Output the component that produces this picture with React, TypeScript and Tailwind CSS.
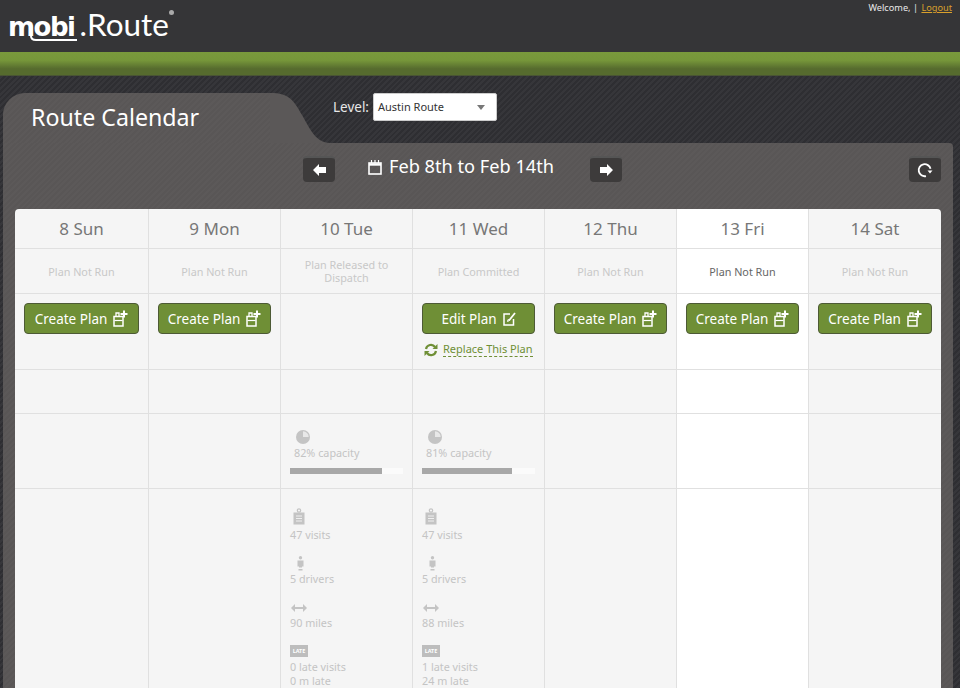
import React from "react"

const font = "font-['Noto_Sans',sans-serif]"

// SVG icons
const CalendarIcon = () => (
  <svg width="14" height="16" viewBox="0 0 14 16" fill="none" stroke="#fff" strokeWidth="1.6">
    <rect x="1" y="4" width="12" height="11" />
    <path d="M1 5.500h12" strokeWidth="2.400" />
    <path d="M3.500 1v3M7 1v3M10.500 1v3" strokeWidth="1.200" />
  </svg>
)

const BlockArrow = ({ dir }: { dir: "left" | "right" }) => (
  <svg width="13" height="12" viewBox="0 0 13 12" fill="#fff">
    {dir === "left" ? <path d="M0 6l6-6v3h7v6H6v3z" /> : <path d="M13 6L7 0v3H0v6h7v3z" />}
  </svg>
)

const ReloadIcon = () => (
  <svg width="16" height="16" viewBox="0 0 16 16" fill="none">
    <path d="M11 13.400A6 6 0 1 1 12.800 5" stroke="#fff" strokeWidth="1.800" transform="rotate(20 8 8)" />
    <path d="M10.500 8.500h5l-2.500 3z" fill="#fff" />
  </svg>
)

const PlanPlusIcon = () => (
  <svg width="15" height="17" viewBox="0 0 15 17" fill="none" stroke="#fff">
    <path d="M1 6.500h9v9.500H1z" strokeWidth="1.500" />
    <path d="M1.500 10.500h8" strokeWidth="1.200" />
    <path d="M3 6V3h3v3" strokeWidth="1.300" />
    <path d="M11 0.500v7M7.500 4h7" strokeWidth="2" />
  </svg>
)

const EditIcon = () => (
  <svg width="13" height="14" viewBox="0 0 13 14" fill="none" stroke="#fff" strokeWidth="1.500">
    <path d="M7 2H1v11h9.500V7" />
    <path d="M12 1L6 8.500" strokeWidth="1.800" />
    <path d="M4.500 9.500l.5-2 1.500 1z" strokeWidth="1" />
  </svg>
)

const SwapIcon = () => (
  <svg className="shrink-0" width="14" height="14" viewBox="0 0 14 14" fill="none" stroke="#6f8f36" strokeWidth="2.200">
    <path d="M2 6a5 5 0 0 1 9-2" />
    <path d="M12 8a5 5 0 0 1-9 2" />
    <path d="M13.500 1v5h-5z" fill="#6f8f36" stroke="none" />
    <path d="M0.500 13V8h5z" fill="#6f8f36" stroke="none" />
  </svg>
)

const PieIcon = () => (
  <svg width="14" height="14" viewBox="0 0 14 14" fill="#c4c4c4">
    <circle cx="7" cy="7" r="7" />
    <path d="M7 7V1.300A5.700 5.700 0 0 1 12.700 7z" fill="#e8e8e8" />
  </svg>
)

const ClipboardIcon = () => (
  <svg width="12" height="17" viewBox="0 0 12 17" fill="none">
    <circle cx="6" cy="2.500" r="1.700" stroke="#c4c4c4" strokeWidth="1.200" />
    <rect x="0.500" y="4.500" width="11" height="12" fill="#c4c4c4" />
    <path d="M3 8h6M3 10.500h6M3 13h6" stroke="#efefef" />
  </svg>
)

const PersonIcon = () => (
  <svg width="7" height="15" viewBox="0 0 7 15" fill="#c4c4c4">
    <circle cx="3.500" cy="1.800" r="1.700" />
    <path d="M0.500 4.500h6v6H5v1H2v-1H0.500z" />
    <rect x="1.500" y="13" width="4" height="1.500" />
  </svg>
)

const WidthIcon = () => (
  <svg width="16" height="8" viewBox="0 0 16 8" fill="#c4c4c4">
    <path d="M0 4l4-4v3h8V0l4 4-4 4V5H4v3z" />
  </svg>
)

const statText = "text-[10.800px] leading-[14px] text-[#c4c4c4]"

const Stat = ({ icon, line, iconBox }: { icon: React.ReactNode; line: string; iconBox: string }) => (
  <div className="mb-[6px]">
    <div className={`h-[24px] flex items-end ${iconBox}`}>{icon}</div>
    <div className={statText}>{line}</div>
  </div>
)

type Day = {
  label: string
  status: string
  action?: "create" | "edit"
  capacity?: number
  visits?: string
  drivers?: string
  miles?: string
  late?: string[]
  today?: boolean
}

const days: Day[] = [
  { label: "8 Sun", status: "Plan Not Run", action: "create" },
  { label: "9 Mon", status: "Plan Not Run", action: "create" },
  { label: "10 Tue", status: "Plan Released to Dispatch", capacity: 82, visits: "47 visits", drivers: "5 drivers", miles: "90 miles", late: ["0 late visits", "0 m late"] },
  { label: "11 Wed", status: "Plan Committed", action: "edit", capacity: 81, visits: "47 visits", drivers: "5 drivers", miles: "88 miles", late: ["1 late visits", "24 m late"] },
  { label: "12 Thu", status: "Plan Not Run", action: "create" },
  { label: "13 Fri", status: "Plan Not Run", action: "create", today: true },
  { label: "14 Sat", status: "Plan Not Run", action: "create" },
]

const GreenButton = ({ text, icon }: { text: string; icon: React.ReactNode }) => (
  <button className="w-full h-[31px] flex items-center justify-center gap-[6px] rounded-[4px] bg-[#6f8f36] border border-[#4d5a35] text-white text-[13.500px]">
    <span className="mt-[1px]">{text}</span>
    {icon}
  </button>
)

function DayColumn({ day, last }: { day: Day; last: boolean }) {
  return (
    <div className={`min-w-0 flex flex-col border-[#e0e0e0] ${last ? "" : "border-r"} ${day.today ? "bg-white" : "bg-[#f5f5f5]"}`}>
      <div className="h-[40px] flex items-center justify-center border-b border-[#e0e0e0] text-[17px] text-[#777]">{day.label}</div>
      <div className={`h-[45px] flex items-center justify-center text-center px-[12px] border-b border-[#e0e0e0] text-[10.800px] leading-[13px] ${day.today ? "text-[#666]" : "text-[#c8c8c8]"}`}>
        {day.status}
      </div>
      <div className="h-[76px] border-b border-[#e0e0e0] px-[9px] pt-[9px]">
        {day.action === "create" && <GreenButton text="Create Plan" icon={<PlanPlusIcon />} />}
        {day.action === "edit" && (
          <>
            <GreenButton text="Edit Plan" icon={<EditIcon />} />
            <div className="flex items-center gap-[5px] mt-[8px] ml-[2px]">
              <SwapIcon />
              <span className="whitespace-nowrap text-[11px] leading-[14px] text-[#6f8f36] border-b border-dashed border-[#6f8f36]">Replace This Plan</span>
            </div>
          </>
        )}
      </div>
      <div className="h-[44px] border-b border-[#e0e0e0]" />
      <div className="h-[75px] border-b border-[#e0e0e0] px-[9px] pt-[16px]">
        {day.capacity !== undefined && (
          <>
            <div className="pl-[6px]"><PieIcon /></div>
            <div className={`pl-[4px] mt-[2px] ${statText}`}>{day.capacity}% capacity</div>
            <div className="mt-[8px] h-[6px] bg-[#fbfbfb]">
              <div className="h-full bg-[#a8a8a8]" style={{ width: `${day.capacity - 1}%` }} />
            </div>
          </>
        )}
      </div>
      <div className="h-[210px] px-[9px] pt-[15px]">
        {day.visits && (
          <>
            <Stat icon={<ClipboardIcon />} line={day.visits} iconBox="pl-[3px] pb-[3px]" />
            <Stat icon={<PersonIcon />} line={day.drivers!} iconBox="pl-[7px] pb-[1px]" />
            <Stat icon={<WidthIcon />} line={day.miles!} iconBox="pl-[1px] pb-[4px]" />
            <div>
              <div className="h-[24px] flex items-end pb-[3px]">
                <span className="w-[18px] h-[12px] bg-[#bdbdbd] text-white text-[5.500px] leading-[12px] text-center font-bold">LATE</span>
              </div>
              {day.late!.map((l) => (
                <div key={l} className={statText}>{l}</div>
              ))}
            </div>
          </>
        )}
      </div>
    </div>
  )
}

export default function App() {
  const stripes = "bg-[repeating-linear-gradient(135deg,#2e2e32_0px,#2e2e32_2px,#36363a_2px,#36363a_4px)]"
  const panel = "bg-[repeating-linear-gradient(135deg,#595656_0px,#595656_2px,#5c5959_2px,#5c5959_4px)]"
  const navBtn = "w-[32px] h-[26px] flex items-center justify-center rounded-[4px] bg-[#3d3b3b] border-t-2 border-[#555]"

  return (
    <div className={`w-[960px] h-[688px] overflow-hidden flex flex-col ${stripes} ${font}`}>
      {/* Header */}
      <header className="h-[52px] shrink-0 flex justify-between items-start bg-[#353537]">
        <div className="relative flex items-baseline ml-[8px] mt-[1px] h-[46px] leading-[46px] text-white">
          <span className="font-['DejaVu_Sans',sans-serif] font-bold text-[26px] tracking-[-1.500px]">mobi</span>
          <span className="font-['Lato',sans-serif] text-[31.500px] ml-[5px]">.Route</span>
          <span className="absolute left-[161px] top-[9px] w-[5px] h-[5px] rounded-full bg-[#aaa]" />
          <svg className="absolute left-[22px] top-[32px]" width="56" height="9" viewBox="0 0 56 9" fill="none">
            <path d="M1 0v3q0 4 5 4h41" stroke="#fff" strokeWidth="2" />
          </svg>
        </div>
        <div className="mt-[2px] mr-[8px] text-[9.200px] leading-[12px] text-[#e8e8e8]">
          Welcome, | <a className="ml-[1px] text-[#d9a02c] underline">Logout</a>
        </div>
      </header>
      <div className="h-[24px] shrink-0 bg-[linear-gradient(#7a9a3c_0%,#76963a_35%,#566b2e_70%,#566b2e_96%,#3c3c3a_100%)]" />

      {/* Title tab */}
      <div className="h-[50px] mt-[17px] shrink-0 flex items-stretch relative">
        <div className={`ml-[3px] w-[268px] ${panel} rounded-tl-[22px] flex items-center`}>
          <h1 className="ml-[28px] -mt-[1px] text-white text-[23.200px]">Route Calendar</h1>
        </div>
        <svg className="-ml-[1px] shrink-0" width="60" height="50" viewBox="0 0 60 50">
          <path d="M0 0C20 0 24 8 32 22S46 50 60 50H0z" fill="#5b5858" />
        </svg>
        <div className="ml-[3px] flex items-center h-[28px] gap-[4px]">
          <span className="text-[13.500px] text-[#e8e8e8]">Level:</span>
          <div className="w-[124px] h-[28px] bg-white rounded-[2px] border border-[#ccc] flex items-center justify-between pl-[4px] pr-[11px] text-[11px] text-[#333]">
            Austin Route
            <span className="w-0 h-0 border-x-[4px] border-x-transparent border-t-[5px] border-t-[#777]" />
          </div>
        </div>
      </div>

      {/* Panel */}
      <main className={`ml-[3px] w-[950px] flex-1 min-h-0 ${panel} rounded-tr-[4px] px-[12px]`}>
        <div className="h-[66px] relative flex items-start pt-[13px]">
          <div className="w-[288px]" />
          <button className={navBtn}><BlockArrow dir="left" /></button>
          <div className="w-[255px] pr-[3px] flex items-center justify-center gap-[7px] h-[22px] text-white text-[18.200px]">
            <CalendarIcon />
            Feb 8th to Feb 14th
          </div>
          <button className={navBtn}><BlockArrow dir="right" /></button>
          <button className={`${navBtn} absolute right-0 top-[13px]`}><ReloadIcon /></button>
        </div>
        <div className="grid grid-cols-[134px_132px_132px_132px_132px_132px_132px] rounded-t-[4px] overflow-hidden">
          {days.map((d, i) => (
            <DayColumn key={d.label} day={d} last={i === days.length - 1} />
          ))}
        </div>
      </main>
    </div>
  )
}
